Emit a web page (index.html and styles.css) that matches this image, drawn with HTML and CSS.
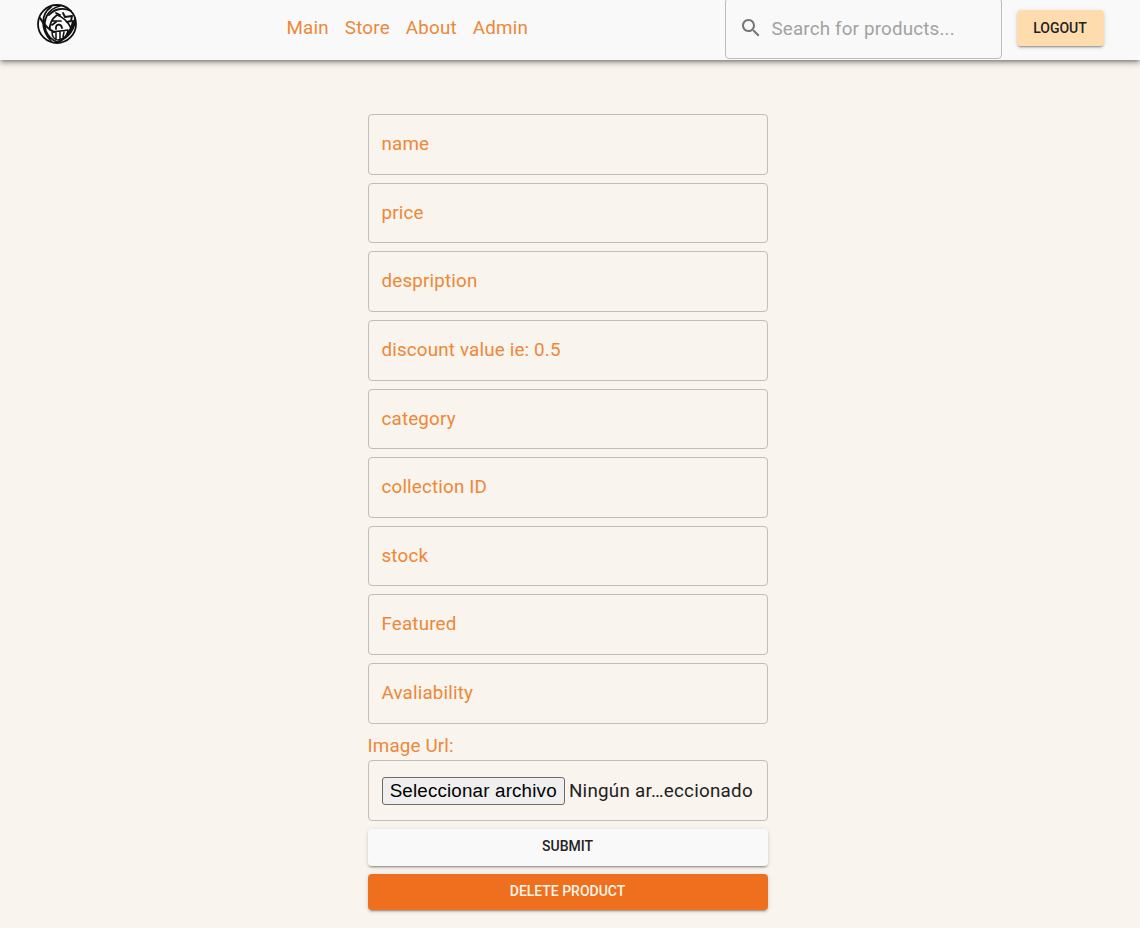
FILE: index.html
```html
<!DOCTYPE html>
<html lang="es">
<head>
<meta charset="utf-8">
<title>Admin</title>
<link rel="stylesheet" href="styles.css">
</head>
<body>
<header class="bar">
  <svg class="logo" viewBox="0 0 40 40" fill="none" stroke="#111" stroke-linecap="round" stroke-linejoin="round">
    <circle cx="20" cy="20" r="19" stroke-width="1.8"/>
    <path d="M14 3C4 10 3 25 14 37M23 2C11 5 5 16 9 27C11 32 15 36 20 38" stroke-width="1.8"/>
    <path d="M3 14C7 21 11 25 17 28M38 14C38 25 32 33 21 38M36 17C35 23 33 27 30 30" stroke-width="2"/>
    <path d="M12 11C17 5 26 3 34 7M19 9L23 11M26 9L28 13L35 12L34 17L30 18" stroke-width="1.9"/>
    <path d="M13 26C12 19 16 14 20 11C26 13 31 18 34 24M15 17L24 17M15 21L19 18" stroke-width="1.7"/>
    <path d="M19 25C18 20 24 19 25 24" stroke-width="1.8"/>
    <path d="M15 28C20 27 26 27 31 26C31 31 27 35 21 36C18 36 15 33 15 28ZM19 28.5L19 35M23 28L23 35M27 28L26 33" stroke-width="1.5"/>
  </svg>
  <nav class="nav">
    <a class="link">Main</a><a class="link">Store</a><a class="link">About</a><a class="link">Admin</a>
  </nav>
  <div class="search">
    <svg class="search-icon" viewBox="0 0 24 24" fill="#757575"><path d="M15.5 14h-.79l-.28-.27C15.41 12.59 16 11.11 16 9.5 16 5.91 13.09 3 9.5 3S3 5.91 3 9.5 5.91 16 9.5 16c1.61 0 3.09-.59 4.23-1.57l.27.28v.79l5 4.99L20.49 19l-4.99-5zm-6 0C7.01 14 5 11.99 5 9.5S7.01 5 9.5 5 14 7.01 14 9.5 11.99 14 9.5 14z"/></svg>
    <span class="hint">Search for products...</span>
  </div>
  <button class="btn logout">LOGOUT</button>
</header>
<main class="form">
  <div class="field">name</div>
  <div class="field">price</div>
  <div class="field">despription</div>
  <div class="field">discount value ie: 0.5</div>
  <div class="field">category</div>
  <div class="field">collection ID</div>
  <div class="field">stock</div>
  <div class="field">Featured</div>
  <div class="field">Avaliability</div>
  <div class="upload">
    <div class="caption">Image Url:</div>
    <div class="field file"><button class="pick">Seleccionar archivo</button><span class="chosen">Ningún ar…eccionado</span></div>
  </div>
  <button class="btn submit">SUBMIT</button>
  <button class="btn delete">DELETE PRODUCT</button>
</main>
</body>
</html>
```
FILE: styles.css
```css
* { box-sizing: border-box; }
body {
  margin: 0;
  height: 928px;
  overflow: hidden;
  background: #f9f4ed;
  font-family: Roboto, sans-serif;
  font-size: 18.8px;
  letter-spacing: 0.17px;
  color: #ec8838;
}
.bar {
  display: flex;
  align-items: flex-start;
  height: 60px;
  padding-left: 37px;
  background: #f9f9f9;
  box-shadow: 0 2px 4px -1px rgba(0,0,0,.4), 0 4px 5px rgba(0,0,0,.14), 0 1px 10px rgba(0,0,0,.12);
}
.logo { width: 40px; height: 40px; margin-top: 4px; }
.nav {
  display: flex;
  gap: 16px;
  width: 438.5px;
  margin: 14px 0 0 209.5px;
  line-height: 28px;
  letter-spacing: 0.2px;
}
.search {
  display: flex;
  align-items: center;
  width: 277px;
  height: 61px;
  margin-top: -2px;
  padding-left: 13px;
  border: 1px solid #bcbcbc;
  border-radius: 4px;
}
.search-icon { width: 24px; height: 24px; margin: -2px 8.5px 0 0; }
.hint { color: #a2a2a2; }
.btn {
  display: block;
  padding: 0 1px 0 0;
  border: 0;
  border-radius: 4px;
  font: 500 14px/35px Roboto, sans-serif;
  letter-spacing: -0.02px;
  color: #222;
  box-shadow: 0 3px 1px -2px rgba(0,0,0,.2), 0 2px 2px rgba(0,0,0,.14), 0 1px 5px rgba(0,0,0,.12);
}
.logout { width: 87px; height: 36px; margin: 10px 0 0 15px; background: #ffdcae; }
.form {
  display: flex;
  flex-direction: column;
  gap: 8px;
  width: 400px;
  margin: 54px 0 0 368px;
}
.field {
  height: 60.65px;
  padding-left: 12.5px;
  border: 1px solid #c2bdb7;
  border-radius: 4px;
  line-height: 58px;
}
.upload { margin-left: -0.5px; }
.caption { height: 28.5px; line-height: 29px; }
.file { display: flex; align-items: center; gap: 4px; margin-left: 0.5px; color: #222; white-space: nowrap; }
.chosen { letter-spacing: 0.26px; }
.pick {
  width: 183.4px;
  height: 28px;
  padding: 0;
  border: 1px solid #6b6b6b;
  border-radius: 3px;
  background: #efefef;
  color: #000;
  font: 18.8px/24px "Liberation Sans", Arial, sans-serif;
  letter-spacing: 0.17px;
}
.submit { height: 37px; padding-bottom: 1px; background: #f9f9f9; }
.delete { height: 36px; background: #ee701e; color: #fff5e8; }
```
